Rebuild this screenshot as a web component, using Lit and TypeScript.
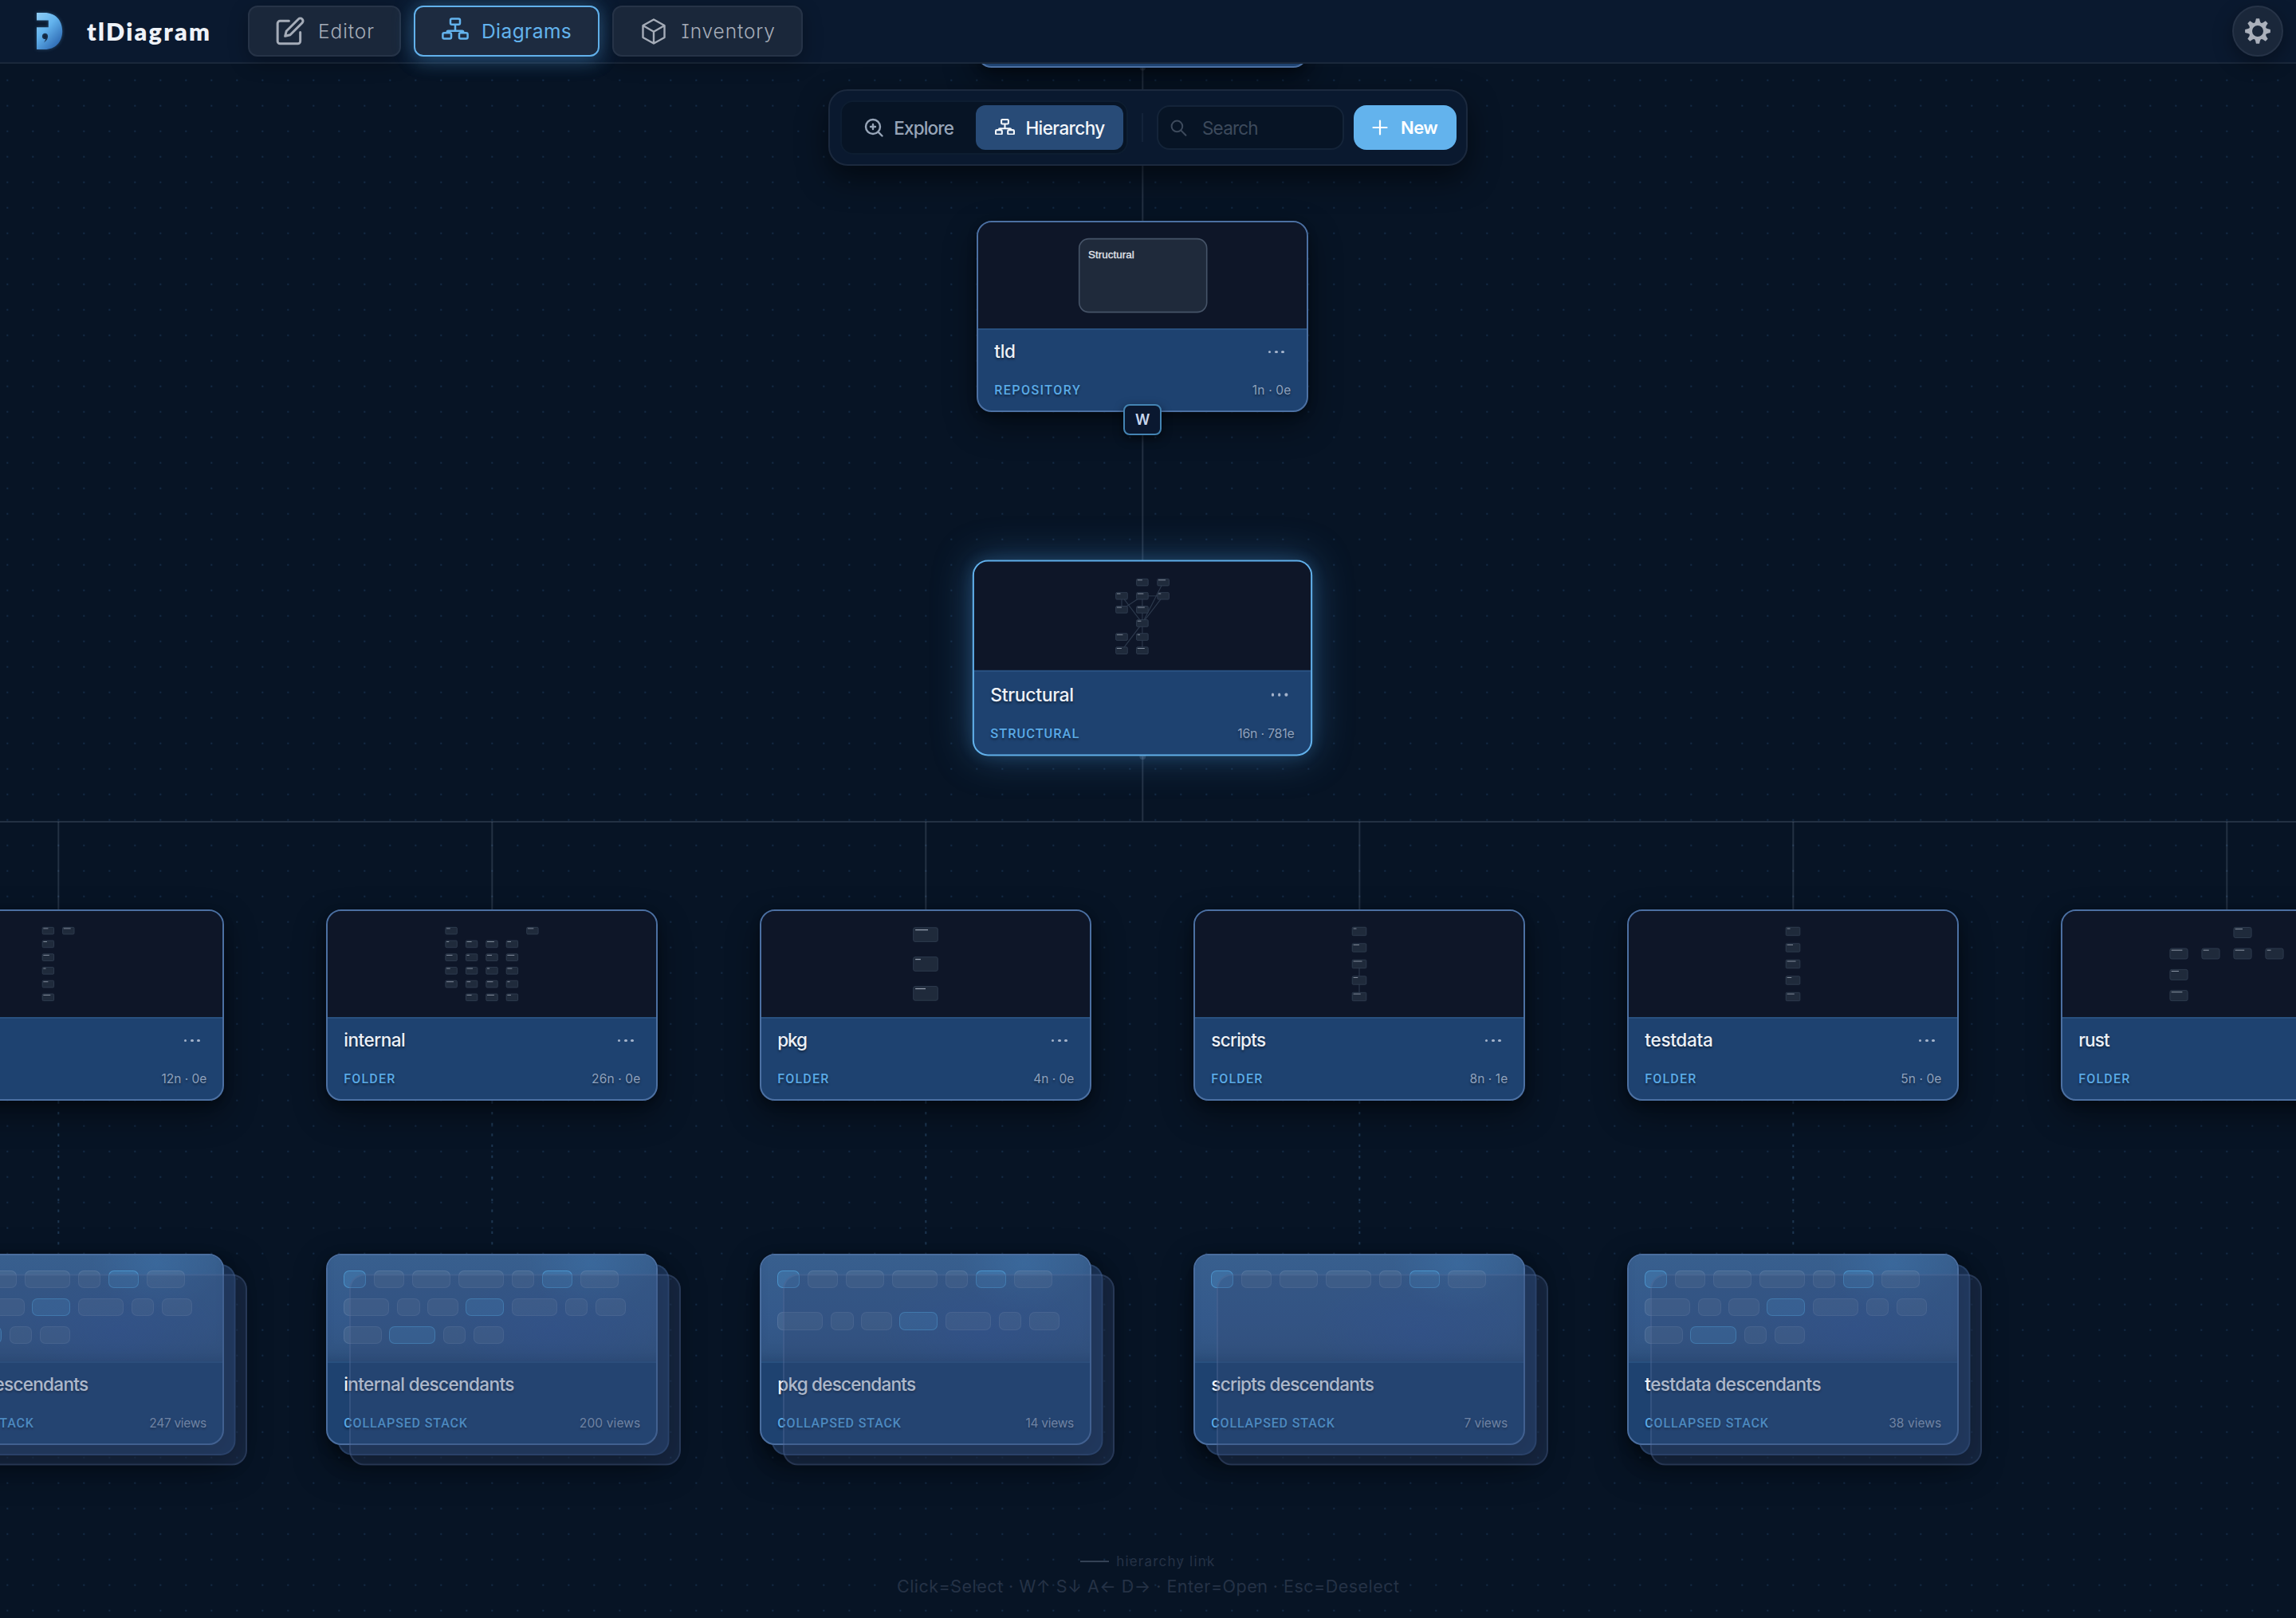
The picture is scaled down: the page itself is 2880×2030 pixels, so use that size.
import { LitElement, html, svg, css, nothing } from "lit";
import { customElement, property } from "lit/decorators.js";
import { classMap } from "lit/directives/class-map.js";
import { styleMap } from "lit/directives/style-map.js";

type Rect = [number, number, number, number];
interface Mini {
  w: number;
  h: number;
  cells: [number, number][];
  edges?: [number, number][];
  label?: string;
}
interface ViewNode {
  x: number;
  y: number;
  title: string;
  titleW: number;
  type: string;
  typeW: number;
  meta: string;
  metaW: number;
  mini?: Mini;
  pills?: number;
  selected?: boolean;
}

const COL = [-134.7, 409.3, 953.3, 1497.3, 2041.3, 2585.3];
const MID = 1225.3;
const ROW = [-155.3, 276.7, 708.7, 1140.7, 1572.7];
const CENTER = 208;

const grid = (xs: number[], ys: number[], at: [number, number][]): [number, number][] =>
  at.map(([c, r]) => [xs[c], ys[r]]);

const range = (n: number) => Array.from({ length: n }, (_, i) => i);
const SIX = range(6).map((i) => 20.4 + i * 16.72);
const FIVE = range(5).map((i) => 20.3 + i * 20.5);

const folder = (col: number, title: string, titleW: number, meta: string, metaW: number, mini: Mini): ViewNode => ({
  x: COL[col], y: ROW[3], title, titleW, type: col > 0 ? "FOLDER" : "", typeW: 64, meta, metaW, mini,
});
const stack = (col: number, name: string, titleW: number, meta: string, metaW: number, pills: number): ViewNode => ({
  x: COL[col], y: ROW[4], title: `${name} descendants`, titleW, type: "COLLAPSED STACK", typeW: 155, meta, metaW, pills,
});

const NODES: ViewNode[] = [
  { x: MID, y: ROW[0], title: "", titleW: 0, type: "", typeW: 0, meta: "", metaW: 0 },
  {
    x: MID, y: ROW[1], title: "tld", titleW: 26.3, type: "REPOSITORY", typeW: 107, meta: "1n · 0e", metaW: 48,
    mini: { w: 160, h: 92, cells: [[126.7, 20.6]], label: "Structural" },
  },
  {
    x: MID, y: ROW[2], title: "Structural", titleW: 102.5, type: "STRUCTURAL", typeW: 108.5, meta: "16n · 781e", metaW: 70,
    selected: true,
    mini: {
      w: 14.2, h: 8.4,
      cells: grid([173.5, 198.8, 224.4], range(6).map((i) => 21.2 + i * 16.7), [
        [1, 0], [2, 0], [0, 1], [1, 1], [2, 1], [0, 2], [1, 2], [1, 3], [0, 4], [1, 4], [0, 5], [1, 5],
      ]),
      edges: [[1, 7], [3, 4], [2, 5], [2, 7], [3, 5], [3, 6], [6, 7], [4, 7], [7, 9], [9, 11], [7, 10]],
    },
  },
  folder(0, "", 0, "12n · 0e", 57, {
    w: 14.4, h: 8.6, cells: grid([186.2, 211.6], SIX, [[0, 0], [1, 0], [0, 1], [0, 2], [0, 3], [0, 4], [0, 5]]),
  }),
  folder(1, "internal", 77.5, "26n · 0e", 61, {
    w: 14.4, h: 8.6,
    cells: grid([147.9, 173.4, 198.8, 224.2, 249.7], SIX, [
      [0, 0], [4, 0], [0, 1], [1, 1], [2, 1], [3, 1], [0, 2], [1, 2], [2, 2], [3, 2],
      [0, 3], [1, 3], [2, 3], [3, 3], [0, 4], [1, 4], [2, 4], [3, 4], [1, 5], [2, 5], [3, 5],
    ]),
  }),
  folder(2, "pkg", 37.7, "4n · 0e", 51, { w: 30.6, h: 17.6, cells: [[190.7, 20.8], [190.7, 57.7], [190.7, 94.6]] }),
  folder(3, "scripts", 68.5, "8n · 1e", 47.5, {
    w: 17.6, h: 10.4, cells: FIVE.map((y) => [197.2, y] as [number, number]), edges: [[2, 3], [3, 4]],
  }),
  folder(4, "testdata", 85, "5n · 0e", 51.5, { w: 17.6, h: 10.4, cells: FIVE.map((y) => [197.2, y] as [number, number]) }),
  folder(5, "rust", 39.3, "", 0, {
    w: 22.2, h: 13,
    cells: grid([134.9, 174.9, 214.9, 254.9], [20.5, 47, 73.4, 99.6], [[2, 0], [0, 1], [1, 1], [2, 1], [3, 1], [0, 2], [0, 3]]),
  }),
  stack(0, "frontend", 224, "247 views", 71.5, 18),
  stack(1, "internal", 214.5, "200 views", 76, 18),
  stack(2, "pkg", 174, "14 views", 61, 14),
  stack(3, "scripts", 204.5, "7 views", 54.5, 7),
  stack(4, "testdata", 221, "38 views", 66.5, 18),
];

const gearPath = () => {
  const pts: string[] = [];
  for (let i = 0; i < 8; i++) {
    const a = (i * Math.PI) / 4;
    for (const [r, d] of [[11.2, -0.34], [12.4, -0.24], [16, -0.13], [16, 0.13], [12.4, 0.24], [11.2, 0.34]]) {
      pts.push(`${(16 + r * Math.sin(a + d)).toFixed(2)} ${(16 - r * Math.cos(a + d)).toFixed(2)}`);
    }
  }
  return `M${pts.join("L")}ZM16 9a7 7 0 1 0 0 14a7 7 0 1 0 0-14Z`;
};

const ICONS = {
  edit: html`<svg width="38" height="38" viewBox="0 0 24 24" fill="none" stroke="currentColor" stroke-width="1.9" stroke-linecap="round" stroke-linejoin="round">
    <path d="M11 4H4a2 2 0 0 0-2 2v14a2 2 0 0 0 2 2h14a2 2 0 0 0 2-2v-7" />
    <path d="M18.5 2.5a2.12 2.12 0 0 1 3 3L12 15l-4 1 1-4z" /></svg>`,
  tree: (w: number, s: number) => html`<svg width=${w} height=${(w * 28) / 34} viewBox="0 0 34 28" fill="none" stroke="currentColor" stroke-width=${s} stroke-linejoin="round">
    <rect x="11" y="1.4" width="12" height="7.4" rx="1.8" />
    <rect x="1.4" y="19.2" width="10.6" height="7.4" rx="1.8" />
    <rect x="22" y="19.2" width="10.6" height="7.4" rx="1.8" />
    <path d="M17 8.8V16.8M6.7 19.2v-1a1.5 1.5 0 0 1 1.5-1.5h17.6a1.5 1.5 0 0 1 1.5 1.5v1" /></svg>`,
  box: html`<svg width="30" height="33" viewBox="0 0 30 33" fill="none" stroke="currentColor" stroke-width="2.4" stroke-linejoin="round">
    <path d="M15 1.5 28.5 9v15L15 31.5 1.5 24V9ZM1.5 9 15 16.8 28.5 9M15 16.8V31.5" /></svg>`,
  explore: html`<svg width="24" height="24" viewBox="0 0 24 24" fill="none" stroke="currentColor" stroke-width="2.4" stroke-linecap="round">
    <circle cx="11" cy="11" r="9" /><path d="m17.6 17.6 4.9 4.9M11 8v6M8 11h6" /></svg>`,
  search: html`<svg width="21" height="21" viewBox="0 0 21 21" fill="none" stroke="currentColor" stroke-width="2" stroke-linecap="round">
    <circle cx="8.4" cy="8.4" r="6.8" /><path d="m13.4 13.6 6 6.2" /></svg>`,
  plus: html`<svg width="20" height="20" viewBox="0 0 20 20" fill="none" stroke="currentColor" stroke-width="2.2" stroke-linecap="round">
    <path d="M10 1.5v17M1.5 10h17" /></svg>`,
  gear: html`<svg width="32" height="32" viewBox="0 0 32 32" fill="currentColor"><path fill-rule="evenodd" d=${gearPath()} /></svg>`,
  logo: html`<svg width="34" height="48" viewBox="0 0 34 48">
    <defs><linearGradient id="lg" x1="0" y1="0" x2="0.75" y2="1">
      <stop offset="0" stop-color="#90cdf4" /><stop offset=".45" stop-color="#63b3ed" /><stop offset="1" stop-color="#2b66b0" />
    </linearGradient></defs>
    <path fill="url(#lg)" fill-rule="evenodd"
      d="M1 1h10C24 1 33.2 10 33.2 24S24 47 11 47H1V19.2h14.8V10.6H1ZM11.4 26.8a3.7 3.7 0 0 0-1 7.2l1.6.1c-.2 1.7-1 3-2 4.4 2.6-1.4 5.1-4.4 5.1-8.2a3.7 3.7 0 0 0-3.7-3.5Z" /></svg>`,
};

/** Text run whose tracking is computed so that it spans a given width. */
@customElement("fit-text")
export class FitText extends LitElement {
  @property({ type: Number }) width = 0;
  @property() text = "";
  static styles = css`
    :host { display: inline-block; white-space: pre; }
    span { display: inline-block; }
  `;
  render() {
    return html`<span>${this.text}</span>`;
  }
  updated() {
    const el = this.renderRoot.querySelector("span") as HTMLElement;
    if (!this.width || this.text.length < 2) return;
    el.style.letterSpacing = "0px";
    const gap = (this.width - el.offsetWidth) / (this.text.length - 1);
    el.style.letterSpacing = `${gap.toFixed(3)}px`;
    el.style.marginRight = `${(-gap).toFixed(3)}px`;
  }
}

const fit = (text: string, width: number) => html`<fit-text .text=${text} .width=${width}></fit-text>`;

@customElement("view-card")
export class ViewCard extends LitElement {
  @property({ attribute: false }) node!: ViewNode;

  static styles = css`
    :host { display: block; width: 416px; height: 240px; position: relative; }
    :host([selected]) { transform: translateY(-3.5px) scale(1.025); }
    .layer {
      position: absolute; inset: 0; box-sizing: border-box; border-radius: 19px;
      border: 2px solid rgba(108, 144, 196, 0.18);
    }
    .back { transform: translate(14.6px, 13px); background: rgba(45, 82, 135, 0.48); box-shadow: 0 8px 24px rgba(0, 0, 0, 0.3); }
    .front { transform: translate(29px, 25.6px); background: rgba(51, 74, 116, 0.34); border-color: rgba(108, 134, 176, 0.22); }
    .card {
      position: relative; box-sizing: border-box; width: 416px; height: 240px;
      display: flex; flex-direction: column; overflow: hidden;
      border: 2px solid #4c70a2; border-radius: 19px; background: #1e4270;
    }
    .shadow {
      position: absolute; inset: 0; border-radius: 19px;
      box-shadow: 0 16px 40px rgba(0, 0, 0, 0.42), 0 4px 12px rgba(0, 0, 0, 0.3);
    }
    .shadow.deep { box-shadow: 8px 22px 46px rgba(0, 0, 0, 0.5), 0 4px 16px rgba(0, 0, 0, 0.3); }
    .selected .shadow { box-shadow: 0 0 48px rgba(75, 148, 214, 0.36), 0 0 18px rgba(75, 148, 214, 0.2); }
    .selected .card { border-color: #62b1eb; border-width: 2.3px; }
    .preview { flex: none; height: 133.4px; background: #0e1628; box-sizing: border-box; }
    .preview svg { display: block; }
    .pills {
      display: flex; flex-wrap: wrap; gap: 9.6px; padding: 19.2px 19.6px; align-content: stretch;
      background:
        radial-gradient(ellipse 80px 60px at 80% 8%, rgba(62, 118, 175, 0.4), transparent),
        radial-gradient(ellipse 130px 70px at 68% 72%, rgba(48, 84, 160, 0.3), transparent),
        linear-gradient(180deg, #385f8e 0%, #34598b 60%, #315481 100%);
      box-shadow: inset 0 -14px 16px -10px rgba(20, 50, 90, 0.35);
    }
    .pill { box-sizing: border-box; height: 22.6px; border-radius: 7px; border: 1.6px solid rgba(140, 165, 200, 0.22); background: rgba(110, 130, 160, 0.26); }
    .pill.w0 { width: 28.6px; }
    .pill.w1 { width: 38.4px; }
    .pill.w2 { width: 48px; }
    .pill.w3 { width: 57.5px; }
    .pill.accent { border-color: rgba(86, 175, 235, 0.55); background: rgba(75, 145, 200, 0.34); }
    .body {
      flex: 1; display: flex; flex-direction: column; justify-content: space-between;
      padding: 13.4px 20px 14.6px; border-top: 2px solid #28507f; box-sizing: border-box;
      text-shadow: 0 2px 3px rgba(0, 0, 0, 0.45);
    }
    .row { display: flex; justify-content: space-between; align-items: center; }
    .title { font-size: 22.5px; line-height: 28px; min-height: 28px; font-weight: 500; color: #edf1f7; }
    .type { font-family: Roboto, sans-serif; font-size: 16px; line-height: 20px; font-weight: 500; color: #5aaae6; }
    .meta { font-size: 15.5px; line-height: 20px; color: #8ea1bd; }
    .dots { display: flex; gap: 4.6px; padding-right: 8.5px; position: relative; top: 0; }
    .dots i { width: 3.6px; height: 3.6px; border-radius: 50%; background: #a3b2ca; }
    .stack .card { border-color: #4a6d9e; }
  `;

  private mini(m: Mini) {
    const big = m.w > 100;
    const mid = ([x, y]: [number, number]) => [x + m.w / 2, y + m.h / 2];
    return svg`
      ${(m.edges ?? []).map(([a, b]) => {
        const [x1, y1] = mid(m.cells[a]);
        const [x2, y2] = mid(m.cells[b]);
        return svg`<line x1=${x1} y1=${y1} x2=${x2} y2=${y2} stroke="#2d3a4d" stroke-width="1.1" />`;
      })}
      ${m.cells.map(([x, y], i) => {
        const r: Rect = [x, y, m.w, m.h];
        return svg`<rect x=${r[0]} y=${r[1]} width=${r[2]} height=${r[3]} rx=${big ? 12 : m.w > 20 ? 2.2 : 1.2}
            fill="#1f2a3b" stroke=${big ? "#465468" : "#303d50"} stroke-width=${big ? 1.6 : 0.9} />
          ${big
            ? nothing
            : svg`<rect x=${x + m.w * 0.08} y=${y + m.h * 0.13} width=${m.w * (0.22 + ((i * 7 + m.cells.length) % 5) * 0.1)}
                height=${Math.max(0.8, m.h * 0.07)} fill="#97a1b0" />`}`;
      })}
      ${m.label
        ? svg`<text x="138" y="45.4" font-family="Liberation Sans, Arial, sans-serif" font-size="13.4" fill="#e4e8ee" stroke="#e4e8ee" stroke-width=".3" textLength="57.8">${m.label}</text>`
        : nothing}`;
  }

  render() {
    const n = this.node;
    const stacked = n.pills !== undefined;
    return html`<div class=${classMap({ root: true, stack: stacked, selected: !!n.selected })}>
      <div class=${classMap({ shadow: true, deep: stacked })}></div>
      ${stacked ? html`<div class="layer back"></div>` : nothing}
      <div class="card">
        ${stacked
          ? html`<div class="preview pills">
              ${range(n.pills!).map((i) => html`<div class=${`pill w${i % 4} ${i % 5 === 0 ? "accent" : ""}`}></div>`)}
            </div>`
          : html`<div class="preview"><svg width="412" height="133">${n.mini ? this.mini(n.mini) : nothing}</svg></div>`}
        <div class="body">
          <div class="row">
            <div class="title">${n.title ? fit(n.title, n.titleW) : nothing}</div>
            ${stacked ? nothing : html`<div class="dots"><i></i><i></i><i></i></div>`}
          </div>
          <div class="row">
            <div class="type">${n.type ? fit(n.type, n.typeW) : nothing}</div>
            <div class="meta">${n.meta ? fit(n.meta, n.metaW) : nothing}</div>
          </div>
        </div>
      </div>
      ${stacked ? html`<div class="layer front"></div>` : nothing}
    </div>`;
  }
}

@customElement("app-root")
export class AppRoot extends LitElement {
  static styles = css`
    :host {
      display: block; position: relative; width: 2880px; height: 2030px; overflow: hidden;
      background: #071425; color: #fff;
      font-family: Inter, "Noto Sans", sans-serif; font-feature-settings: "cv08";
    }
    header {
      position: relative; z-index: 3; display: flex; align-items: center; box-sizing: border-box;
      height: 80px; padding: 0 16px 0 45px; background: #0a192f; border-bottom: 2px solid #1a283b;
    }
    .brand { display: flex; align-items: center; gap: 30px; width: 266px; flex: none; }
    .brand svg { filter: drop-shadow(0 0 2px rgba(99, 179, 237, 0.35)); }
    .name { font-family: Lato, sans-serif; font-weight: 800; font-size: 30.5px; line-height: 40px; color: #eef2f8; }
    nav { display: flex; gap: 16px; flex: 1; }
    .tab {
      box-sizing: border-box; height: 64px; display: flex; align-items: center; gap: 19px; padding-left: 34px;
      border: 2px solid #263347; border-radius: 12px; background: #1a273a; color: #a5acb8;
      font-size: 24.5px; font-weight: 300; box-shadow: 0 8px 24px rgba(0, 0, 0, 0.28);
    }
    .tab.editor { width: 192px; gap: 16.5px; padding-left: 31.5px; }
    .tab.diagrams { width: 233px; gap: 16px; padding-left: 33px; }
    .tab.inventory { width: 239px; padding-left: 35px; gap: 19.5px; }
    .tab.active {
      border-color: #62b1eb; background: #1d2b40; color: #63b3ed; font-weight: 400;
      box-shadow: 0 0 28px rgba(99, 179, 237, 0.32), 0 8px 24px rgba(60, 130, 190, 0.2);
    }
    .tab.active svg { margin-top: -6px; }
    .settings {
      box-sizing: border-box; width: 64px; height: 64px; border-radius: 50%; border: 2px solid #263347;
      background: #1a273a; color: #aab0bb; display: grid; place-items: center; box-shadow: 0 8px 24px rgba(0, 0, 0, 0.35);
    }
    .canvas {
      position: absolute; inset: 0;
      background-image: radial-gradient(circle at 16px 16px, #152d49 0.6px, transparent 1.6px);
      background-size: 32px 32px; background-position: -6.7px -11.3px;
    }
    .links { position: absolute; inset: 0; }
    .links .solid { stroke: rgba(175, 195, 220, 0.17); stroke-width: 2; fill: none; }
    .links .dashed { stroke: rgba(99, 160, 220, 0.25); stroke-width: 2; stroke-dasharray: 3.2 10.4; }
    .links circle { fill: rgba(150, 175, 205, 0.22); }
    view-card { position: absolute; }
    .badge {
      position: absolute; left: 1409.3px; top: 507px; width: 48px; height: 38.6px; box-sizing: border-box;
      display: grid; place-items: center; border: 2px solid #4484b3; border-radius: 8px; background: #0a1830;
      color: #c8d7ee; font-size: 18px; font-weight: 600; box-shadow: 0 4px 12px rgba(0, 0, 0, 0.5);
    }
    .toolbar {
      position: absolute; z-index: 2; left: 1039.3px; top: 111.7px; box-sizing: border-box; width: 802px; height: 96.3px;
      display: flex; align-items: center; padding: 0 12.4px; border: 2px solid #1b293e; border-radius: 24px;
      background: #0a192f; box-shadow: 0 16px 36px rgba(0, 0, 0, 0.5); font-size: 22.5px; font-weight: 500;
    }
    .segment {
      box-sizing: border-box; width: 361.7px; height: 68px; padding: 4px; display: flex; align-items: center;
      border: 2px solid #0d1d31; border-radius: 16px; background: #071425;
    }
    .seg { height: 56px; display: flex; align-items: center; border-radius: 12px; box-sizing: border-box; padding-top: 1px; }
    .seg.explore { width: 164.7px; padding-left: 24.5px; gap: 13px; color: #97a5b8; }
    .seg.hierarchy { width: 186px; padding-left: 24.5px; gap: 13px; background: #284b77; color: #f4f7fb; }
    .seg.hierarchy svg { margin-top: -3px; }
    .rule { width: 2px; height: 36px; margin: 0 16.8px; background: #13233a; }
    .search {
      box-sizing: border-box; width: 234.7px; height: 56px; padding: 1px 0 0 15px; display: flex; align-items: center; gap: 19px;
      border: 2px solid #142439; border-radius: 16px; background: #071425; color: #3d4a5c; font-weight: 400;
    }
    .new {
      margin-left: 12.3px; width: 128.6px; height: 56px; box-sizing: border-box; padding: 1px 0 0 23px; display: flex;
      align-items: center; gap: 16px; border-radius: 16px; background: #63b3ed; color: #fff; font-weight: 600;
      font-size: 22px;
    }
    footer {
      position: absolute; left: 0; right: 0; top: 1946px; display: flex; flex-direction: column; align-items: center;
      color: #253246;
    }
    .legend { display: flex; align-items: center; gap: 9.5px; font-size: 17px; line-height: 26px; height: 26px; margin-left: -2px; }
    .legend i { width: 36px; height: 2px; background: #344255; }
    .hint { font-size: 21.5px; line-height: 30px; margin-top: 3px; }
  `;

  render() {
    const cx = MID + CENTER;
    const busY = 1031;
    return html`
      <header>
        <div class="brand">${ICONS.logo}<span class="name">${fit("tlDiagram", 154)}</span></div>
        <nav>
          <div class="tab editor">${ICONS.edit}${fit("Editor", 70.5)}</div>
          <div class="tab diagrams active">${ICONS.tree(34, 2.5)}${fit("Diagrams", 113)}</div>
          <div class="tab inventory">${ICONS.box}${fit("Inventory", 118)}</div>
        </nav>
        <div class="settings">${ICONS.gear}</div>
      </header>
      <div class="canvas">
        <svg class="links" width="2880" height="2030">
          <path class="solid" d="M${cx} 85V277M${cx} 517V705M${cx} 949V${busY}M0 ${busY}H2880" />
          ${COL.map((x) => svg`<path class="solid" d="M${x + CENTER} ${busY}V1141" />`)}
          ${COL.slice(0, 5).map((x) => svg`<path class="dashed" d="M${x + CENTER} 1381.5V1572" />`)}
          <circle cx=${cx} cy="85" r="3.6" /><circle cx=${cx} cy="949" r="4" />
        </svg>
        ${NODES.map(
          (n) => html`<view-card ?selected=${!!n.selected} .node=${n} style=${styleMap({ left: `${n.x}px`, top: `${n.y}px` })}></view-card>`,
        )}
        <div class="badge">W</div>
      </div>
      <div class="toolbar">
        <div class="segment">
          <div class="seg explore">${ICONS.explore}${fit("Explore", 76)}</div>
          <div class="seg hierarchy">${ICONS.tree(25, 2.9)}${fit("Hierarchy", 99.5)}</div>
        </div>
        <div class="rule"></div>
        <div class="search">${ICONS.search}${fit("Search", 71)}</div>
        <div class="new">${ICONS.plus}${fit("New", 47)}</div>
      </div>
      <footer>
        <div class="legend"><i></i>${fit("hierarchy link", 123.5)}</div>
        <div class="hint">${fit("Click=Select · W↑ S↓ A← D→ · Enter=Open · Esc=Deselect", 630)}</div>
      </footer>
    `;
  }
}
